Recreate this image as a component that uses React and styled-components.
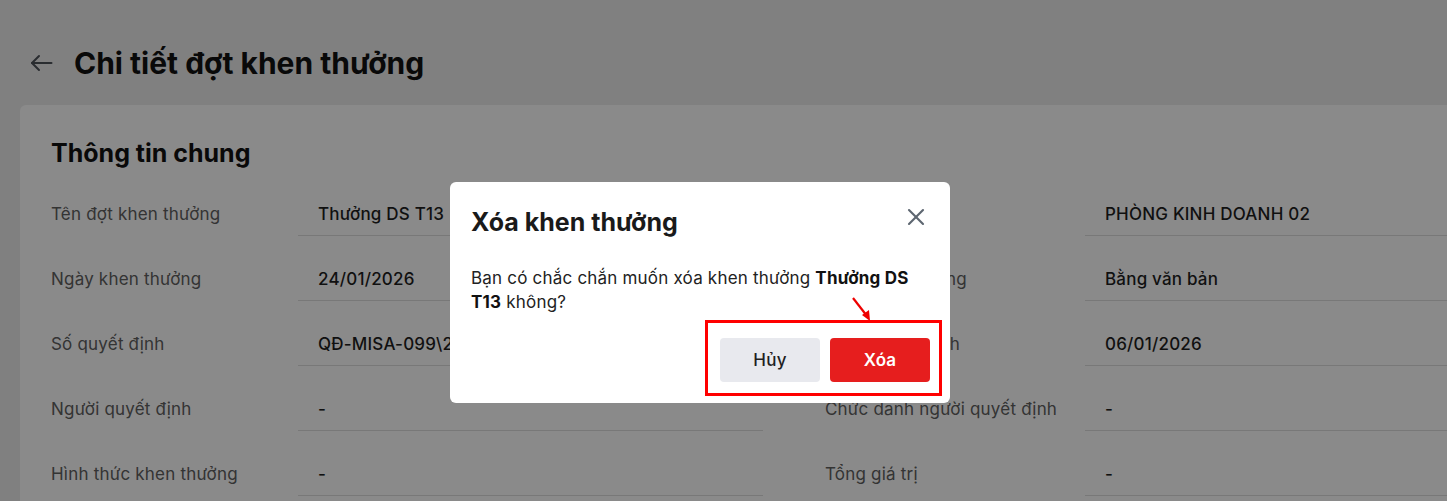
import React from 'react';
import styled, { createGlobalStyle } from 'styled-components';
import { X } from 'lucide-react';

const GlobalStyle = createGlobalStyle`
  html, body {
    margin: 0;
    padding: 0;
    background: #ededed;
    font-family: Inter, "Noto Sans", sans-serif;
    overflow: hidden;
  }
  * { box-sizing: border-box; }
`;

const Page = styled.div`
  width: 1447px;
  height: 501px;
  overflow: hidden;
  position: relative;
`;

const Header = styled.div`
  display: flex;
  align-items: center;
  gap: 21px;
  height: 105px;
  padding: 20px 0 0 30px;
`;

const BackButton = styled.button`
  display: flex;
  align-items: center;
  border: none;
  background: none;
  padding: 0;
  color: #4e535a;
  cursor: pointer;
`;

const Title = styled.h1`
  margin: 0;
  font-size: 30px;
  font-weight: 700;
  color: #111;
  line-height: 38px;
`;

const Card = styled.section`
  margin-left: 20px;
  width: 1520px;
  background: #fff;
  border-radius: 6px 6px 0 0;
  padding: 30px 31px;
  min-height: 420px;
`;

const SectionTitle = styled.h2`
  margin: 0;
  font-size: 25px;
  font-weight: 700;
  color: #111;
  line-height: 36px;
`;

const Columns = styled.div`
  display: grid;
  grid-template-columns: 712px 712px;
  column-gap: 62px;
`;

const Column = styled.div`
  display: flex;
  flex-direction: column;
`;

const Row = styled.div`
  display: grid;
  grid-template-columns: ${p => p.labelWidth}px 1fr;
  height: 65px;
`;

const Label = styled.div`
  padding-top: 31px;
  font-size: 17px;
  letter-spacing: 0.2px;
  line-height: 24px;
  color: #606060;
  white-space: nowrap;
`;

const Value = styled.div`
  padding: 31px 0 0 20px;
  font-size: 17px;
  letter-spacing: 0.2px;
  line-height: 24px;
  font-weight: 500;
  color: #1f1f1f;
  border-bottom: 1px solid #dedede;
  white-space: nowrap;
  overflow: hidden;
`;

const Overlay = styled.div`
  position: fixed;
  inset: 0;
  background: rgba(0, 0, 0, 0.46);
  padding: 182px 0 0 450px;
`;

const Dialog = styled.div`
  position: relative;
  width: 500px;
  height: 221px;
  background: #fff;
  border-radius: 6px;
  padding: 24px 20px 21px 21px;
  display: flex;
  flex-direction: column;
`;

const DialogHeader = styled.div`
  display: flex;
  align-items: flex-start;
  justify-content: space-between;
`;

const DialogTitle = styled.h3`
  margin: 0;
  font-size: 25px;
  font-weight: 700;
  color: #1a1a1a;
  line-height: 32px;
`;

const CloseButton = styled.button`
  border: none;
  background: none;
  padding: 0;
  margin-top: -3px;
  display: flex;
  color: #5d6670;
  cursor: pointer;
`;

const Message = styled.p`
  margin: 28px 0 0;
  font-size: 17px;
  letter-spacing: 0.2px;
  line-height: 24px;
  color: #222;
  padding-right: 8px;

  b { font-weight: 700; color: #111; }
`;

const Actions = styled.div`
  margin-top: auto;
  display: flex;
  justify-content: flex-end;
  gap: 10px;
`;

const Button = styled.button`
  width: 100px;
  height: 44px;
  border: none;
  border-radius: 4px;
  font-family: inherit;
  font-size: 17px;
  letter-spacing: 0.2px;
  font-weight: ${p => (p.danger ? 600 : 500)};
  color: ${p => (p.danger ? '#fff' : '#1f1f1f')};
  background: ${p => (p.danger ? '#e61e1e' : '#e8e9ee')};
  cursor: pointer;
`;

const Highlight = styled.div`
  position: absolute;
  left: 255px;
  top: 138px;
  width: 237px;
  height: 76px;
  border: 3px solid #ff0000;
  pointer-events: none;
`;

const Pointer = styled.svg`
  position: absolute;
  left: 398px;
  top: 112px;
  pointer-events: none;
`;

const leftRows = [
  ['Tên đợt khen thưởng', 'Thưởng DS T13'],
  ['Ngày khen thưởng', '24/01/2026'],
  ['Số quyết định', 'QĐ-MISA-099\\2026'],
  ['Người quyết định', '-'],
  ['Hình thức khen thưởng', '-'],
];

const rightRows = [
  ['Phòng ban', 'PHÒNG KINH DOANH 02'],
  ['Loại khen thưởng', 'Bằng văn bản'],
  ['Ngày quyết định', '06/01/2026'],
  ['Chức danh người quyết định', '-'],
  ['Tổng giá trị', '-'],
];

export default function App() {
  return (
    <Page>
      <GlobalStyle />
      <Header>
        <BackButton aria-label="Quay lại">
          <svg width="23" height="18" viewBox="0 0 23 18" fill="none" stroke="currentColor" strokeWidth="2" strokeLinecap="round" strokeLinejoin="round">
            <path d="M21.5 9H2" />
            <path d="M9 2 2 9l7 7" />
          </svg>
        </BackButton>
        <Title>Chi tiết đợt khen thưởng</Title>
      </Header>
      <Card>
        <SectionTitle>Thông tin chung</SectionTitle>
        <Columns>
          <Column>
            {leftRows.map(([l, v]) => (
              <Row key={l} labelWidth={247}>
                <Label>{l}</Label>
                <Value>{v}</Value>
              </Row>
            ))}
          </Column>
          <Column>
            {rightRows.map(([l, v]) => (
              <Row key={l} labelWidth={260}>
                <Label>{l}</Label>
                <Value>{v}</Value>
              </Row>
            ))}
          </Column>
        </Columns>
      </Card>

      <Overlay>
        <Dialog>
          <DialogHeader>
            <DialogTitle>Xóa khen thưởng</DialogTitle>
            <CloseButton aria-label="Đóng">
              <X size={28} strokeWidth={1.8} />
            </CloseButton>
          </DialogHeader>
          <Message>
            Bạn có chắc chắn muốn xóa khen thưởng <b>Thưởng DS T13</b> không?
          </Message>
          <Actions>
            <Button>Hủy</Button>
            <Button danger>Xóa</Button>
          </Actions>
          <Highlight />
          <Pointer width="30" height="30" viewBox="0 0 30 30">
            <line x1="5" y1="4" x2="19" y2="22" stroke="#e00" strokeWidth="2.2" />
            <polygon points="22,27 14,21 21,16" fill="#e00" />
          </Pointer>
        </Dialog>
      </Overlay>
    </Page>
  );
}
